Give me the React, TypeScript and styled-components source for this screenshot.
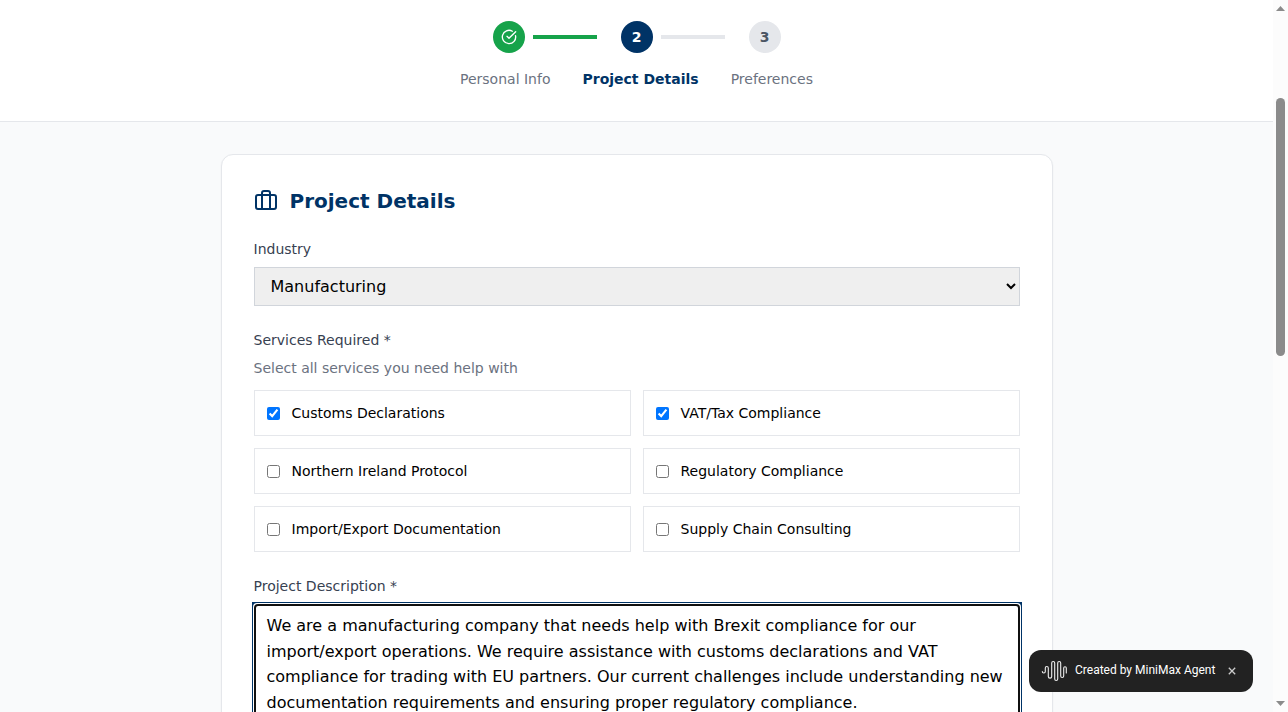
import React from "react";
import styled, { createGlobalStyle } from "styled-components";
import { LuCircleCheckBig } from "react-icons/lu";

const GlobalStyle = createGlobalStyle`
  *, *::before, *::after { box-sizing: border-box; }
  html, body { margin: 0; height: 100%; overflow: hidden; }
  body {
    font-family: "DejaVu Sans", sans-serif;
    font-size: 16px;
    line-height: 1.6;
    background: #f9fafb;
    color: #000;
  }
`;

const Viewport = styled.div`
  display: flex;
  width: 100%;
  height: 712px;
  overflow: hidden;
`;

const Page = styled.div`
  flex: 1;
  min-width: 0;
  height: 712px;
  overflow: hidden;
  background: #f9fafb;
`;

const StepHeader = styled.header`
  height: 122px;
  padding-top: 21px;
  background: #fff;
  border-bottom: 1px solid #e5e7eb;
`;

const Steps = styled.div`
  display: flex;
  justify-content: center;
  align-items: center;
  gap: 24px;
`;

const StepGroup = styled.div`
  display: flex;
  align-items: center;
  gap: 8px;
`;

const StepCircle = styled.div<{ $bg: string; $fg: string }>`
  display: flex;
  align-items: center;
  justify-content: center;
  width: 32px;
  height: 32px;
  border-radius: 50%;
  background: ${(p) => p.$bg};
  color: ${(p) => p.$fg};
  font-size: 14px;
  line-height: 20px;
  font-weight: 700;
`;

const StepLine = styled.div<{ $color: string }>`
  width: 64px;
  height: 4px;
  background: ${(p) => p.$color};
`;

const StepLabels = styled.div`
  display: flex;
  justify-content: center;
  gap: 32px;
  margin-top: 16px;
  font-size: 14px;
  line-height: 20px;
`;

const StepLabel = styled.span<{ $active?: boolean }>`
  color: ${(p) => (p.$active ? "#003366" : "#6b7280")};
  font-weight: ${(p) => (p.$active ? 700 : 400)};
`;

const Main = styled.main`
  width: 896px;
  margin: 0 auto;
  padding: 32px;
`;

const Card = styled.section`
  height: 800px;
  padding: 32px;
  background: #fff;
  border: 1px solid #e5e7eb;
  border-radius: 12px;
  box-shadow: 0 1px 2px rgba(0, 0, 0, 0.05);
`;

const CardTitle = styled.h2`
  display: flex;
  align-items: center;
  gap: 12px;
  margin: 0 0 24px;
  color: #003366;
  font-size: 20px;
  line-height: 28px;
  font-weight: 700;
`;

const Label = styled.label`
  display: block;
  margin-bottom: 8px;
  color: #374151;
  font-size: 14px;
  line-height: 20px;
`;

const Hint = styled.p`
  margin: 0 0 12px;
  color: #6b7280;
  font-size: 14px;
  line-height: 20px;
`;

const Field = styled.div`
  margin-bottom: 24px;
`;

const Select = styled.select`
  display: block;
  width: 100%;
  height: 39px;
  padding: 8px 12px;
  border: 1px solid #d1d5db;
  border-radius: 0;
  background-color: #efefef;
  color: #000;
  font: 16px "DejaVu Sans", sans-serif;
`;

const ServiceGrid = styled.div`
  display: grid;
  grid-template-columns: 1fr 1fr;
  gap: 12px;
`;

const Service = styled.label`
  display: flex;
  align-items: center;
  height: 46px;
  padding: 0 12px;
  border: 1px solid #e5e7eb;
  font-size: 14px;
  line-height: 20px;
`;

const Checkbox = styled.input`
  width: 13px;
  height: 13px;
  margin: 0 12px 0 0;
`;

const Description = styled.textarea`
  display: block;
  width: 100%;
  height: 150px;
  padding: 8px 12px;
  border: 1px solid #d1d5db;
  resize: none;
  overflow: hidden;
  color: #000;
  caret-color: transparent;
  font: 16px/25.6px "DejaVu Sans", sans-serif;
  &:focus { box-shadow: 0 0 0 2px #003366; }
`;

const ScrollTrack = styled.div`
  display: flex;
  flex-direction: column;
  align-items: center;
  width: 15px;
  height: 712px;
  padding: 6px 0;
  background: #fcfcfc;
`;

const Arrow = styled.div<{ $down?: boolean }>`
  width: 9px;
  height: 5px;
  background: #8b8b8b;
  clip-path: ${(p) => (p.$down ? "polygon(0 0, 100% 0, 50% 100%)" : "polygon(50% 0, 100% 100%, 0 100%)")};
  ${(p) => p.$down && "margin-top: auto;"}
`;

const Thumb = styled.div`
  width: 9px;
  height: 258px;
  margin-top: 87px;
  border-radius: 5px;
  background: #8b8b8b;
`;

const Badge = styled.div`
  position: fixed;
  right: 35px;
  bottom: 20px;
  display: flex;
  align-items: center;
  width: 224px;
  height: 42px;
  padding: 0 12px;
  border-radius: 12px;
  background: #222;
  color: #fff;
  font: 400 12px/18px Roboto, sans-serif;
  white-space: nowrap;
`;

const BadgeText = styled.span`
  margin-left: 8px;
  padding-bottom: 2px;
`;

const CloseMark = styled.svg`
  margin-left: auto;
  margin-right: 5px;
`;

const services = [
  { name: "Customs Declarations", checked: true },
  { name: "VAT/Tax Compliance", checked: true },
  { name: "Northern Ireland Protocol", checked: false },
  { name: "Regulatory Compliance", checked: false },
  { name: "Import/Export Documentation", checked: false },
  { name: "Supply Chain Consulting", checked: false },
];

const description =
  "We are a manufacturing company that needs help with Brexit compliance for our import/export operations. We require assistance with customs declarations and VAT compliance for trading with EU partners. Our current challenges include understanding new documentation requirements and ensuring proper regulatory compliance.";

const BriefcaseIcon = () => (
  <svg width="24" height="24" viewBox="0 0 24 24" fill="none" stroke="currentColor" strokeWidth="2" strokeLinecap="round" strokeLinejoin="round">
    <path d="M16 20V4a2 2 0 0 0-2-2h-4a2 2 0 0 0-2 2v16" />
    <rect width="20" height="14" x="2" y="6" rx="2" />
  </svg>
);

const WaveLogo = () => (
  <svg width="26" height="22" viewBox="0 0 26 22" fill="none" stroke="#eee" strokeWidth="1.1" strokeLinecap="round">
    <path d="M1.3 11.5a1.5 1.5 0 0 0 3 0V8a1.5 1.5 0 0 1 3 0v8.4a1.7 1.7 0 0 0 3.4 0V3a1.5 1.5 0 0 1 3 0v16a1.5 1.5 0 0 0 3 0V3a1.5 1.5 0 0 1 3 0v13a1.5 1.5 0 0 0 3 0V8a1.3 1.3 0 0 1 2.6 0v5" />
  </svg>
);

export default function App() {
  return (
    <>
      <GlobalStyle />
      <Viewport>
        <Page>
          <StepHeader>
            <Steps>
              <StepGroup>
                <StepCircle $bg="#16a34a" $fg="#fff"><LuCircleCheckBig size={16} /></StepCircle>
                <StepLine $color="#16a34a" />
              </StepGroup>
              <StepGroup>
                <StepCircle $bg="#003366" $fg="#fff">2</StepCircle>
                <StepLine $color="#e5e7eb" />
              </StepGroup>
              <StepCircle $bg="#e5e7eb" $fg="#4b5563">3</StepCircle>
            </Steps>
            <StepLabels>
              <StepLabel>Personal Info</StepLabel>
              <StepLabel $active>Project Details</StepLabel>
              <StepLabel>Preferences</StepLabel>
            </StepLabels>
          </StepHeader>
          <Main>
            <Card>
              <CardTitle><BriefcaseIcon />Project Details</CardTitle>
              <Field>
                <Label htmlFor="industry">Industry</Label>
                <Select id="industry" defaultValue="Manufacturing">
                  <option>Manufacturing</option>
                </Select>
              </Field>
              <Field>
                <Label as="div">Services Required *</Label>
                <Hint>Select all services you need help with</Hint>
                <ServiceGrid>
                  {services.map((s) => (
                    <Service key={s.name}>
                      <Checkbox type="checkbox" defaultChecked={s.checked} />
                      {s.name}
                    </Service>
                  ))}
                </ServiceGrid>
              </Field>
              <Label htmlFor="description">Project Description *</Label>
              <Description id="description" autoFocus defaultValue={description} />
            </Card>
          </Main>
        </Page>
        <ScrollTrack>
          <Arrow />
          <Thumb />
          <Arrow $down />
        </ScrollTrack>
      </Viewport>
      <Badge>
        <WaveLogo />
        <BadgeText>Created by MiniMax Agent</BadgeText>
        <CloseMark width="8" height="8" viewBox="0 0 8 8" stroke="#ccc" strokeWidth="1.3">
          <path d="M0.8 0.8l6.4 6.4M7.2 0.8L0.8 7.2" />
        </CloseMark>
      </Badge>
    </>
  );
}
